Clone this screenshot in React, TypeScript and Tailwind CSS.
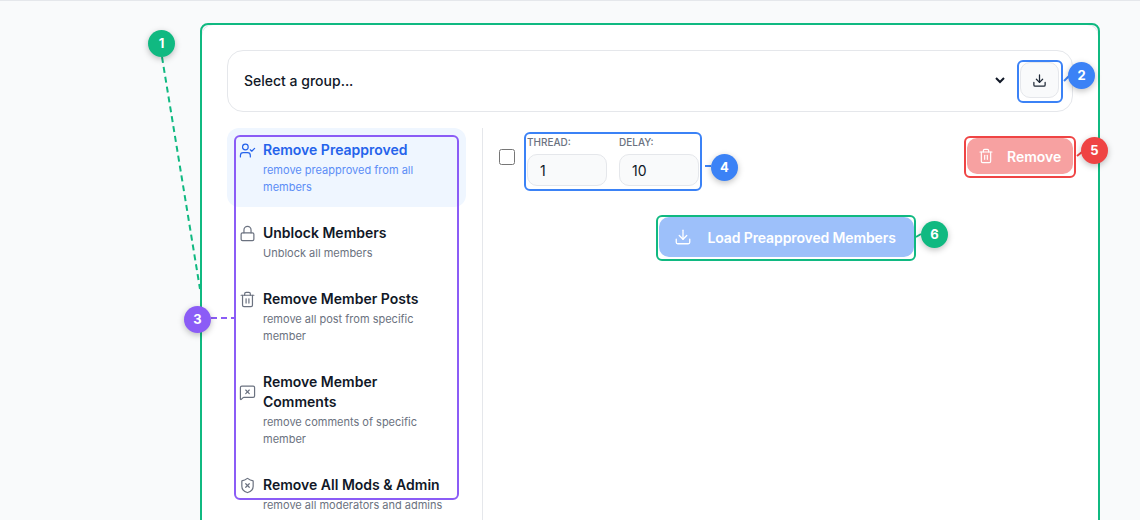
import { Download, Lock, MessageSquareX, ShieldX, Trash2, UserCheck } from "lucide-react";
import type { ReactNode } from "react";

const items = [
  { icon: UserCheck, title: "Remove Preapproved", desc: "remove preapproved from all members", active: true },
  { icon: Lock, title: "Unblock Members", desc: "Unblock all members" },
  { icon: Trash2, title: "Remove Member Posts", desc: "remove all post from specific member" },
  { icon: MessageSquareX, title: "Remove Member Comments", desc: "remove comments of specific member" },
  { icon: ShieldX, title: "Remove All Mods & Admin", desc: "remove all moderators and admins" },
];

function Badge({ className, children }: { className: string; children: ReactNode }) {
  return (
    <div className={`absolute flex h-[27px] w-[27px] items-center justify-center rounded-full text-[13px] font-bold text-white shadow-[0_2px_6px_rgba(0,0,0,0.25)] ${className}`}>
      {children}
    </div>
  );
}

export default function App() {
  return (
    <div className="relative h-[520px] w-full overflow-hidden border-t border-[#e5e7eb] bg-[#f9fafb] font-['Inter',sans-serif] text-[#111827]">
      <div className="ml-[201px] mt-[23px] h-[600px] w-[898px] rounded-[12px] border border-[#e5e7eb] bg-white pl-[25px] pr-[25px] pt-[25px]">
        <div className="flex h-[62px] items-center rounded-[16px] border border-[#e5e7eb] bg-white pl-[12px] pr-[13px]">
          <select className="mb-[2px] h-full flex-1 bg-transparent text-[14px] font-medium outline-none">
            <option>Select a group...</option>
          </select>
          <button className="ml-[12px] mb-[2px] flex h-[36px] w-[39px] items-center justify-center rounded-[10px] border border-[#e5e7eb] bg-[#f9fafb] text-[#1f2937]">
            <Download size={15} strokeWidth={2} />
          </button>
        </div>
        <div className="mt-[16px] flex">
          <div className="flex w-[239px] shrink-0 flex-col gap-[4px]">
            {items.map((it) => (
              <div key={it.title} className={`rounded-[12px] px-[12px] pb-[11px] pt-[12px] ${it.active ? "bg-[#eff6ff]" : ""}`}>
                <div className="flex items-center gap-[7px]">
                  <it.icon size={17} strokeWidth={1.7} className={`shrink-0 ${it.active ? "text-[#2563eb]" : "text-[#6b7280]"}`} />
                  <div className={`text-[14px] font-semibold leading-[20px] ${it.active ? "text-[#2563eb]" : "text-[#111827]"}`}>{it.title}</div>
                </div>
                <div className={`ml-[24px] mt-[2px] text-[11px] leading-[17px] ${it.active ? "text-[#5b8df6]" : "text-[#6b7280]"}`}>{it.desc}</div>
              </div>
            ))}
          </div>
          <div className="ml-[16px] flex h-[400px] flex-1 flex-col border-l border-[#e5e7eb] pl-[16px]">
            <div className="flex items-start">
              <input type="checkbox" className="mt-[21px] h-4 w-4" />
              <div className="ml-[12px] mt-[7px] flex gap-[12px]">
                <div className="w-[80px]">
                  <div className="text-[10px] font-medium leading-[14px] text-[#6b7280]">THREAD:</div>
                  <input readOnly value="1" className="mt-[5px] h-[32px] w-full rounded-[10px] border border-[#e5e7eb] bg-[#f9fafb] px-[12px] text-[14px] outline-none" />
                </div>
                <div className="w-[80px]">
                  <div className="text-[10px] font-medium leading-[14px] text-[#6b7280]">DELAY:</div>
                  <input readOnly value="10" className="mt-[5px] h-[32px] w-full rounded-[10px] border border-[#e5e7eb] bg-[#f9fafb] px-[12px] text-[14px] outline-none" />
                </div>
              </div>
              <button className="ml-auto mt-[10px] flex h-[36px] w-[106px] items-center rounded-[10px] bg-[#f7a1a1] pl-[11px] text-[14px] font-semibold text-white">
                <Trash2 size={16} strokeWidth={1.75} />
                <span className="ml-[13px]">Remove</span>
              </button>
            </div>
            <div className="mt-[31px] flex justify-center">
              <button className="flex h-[40px] w-[255px] items-center rounded-[10px] bg-[#9dc0fa] pl-[15px] text-[14px] font-semibold text-white">
                <Download size={18} strokeWidth={1.75} />
                <span className="ml-[16px] whitespace-nowrap tracking-[-0.12px]">Load Preapproved Members</span>
              </button>
            </div>
          </div>
        </div>
      </div>

      {/* annotation outlines */}
      <div className="pointer-events-none absolute left-[200px] top-[22px] h-[620px] w-[900px] rounded-[8px] border-2 border-[#10b981]" />
      <div className="pointer-events-none absolute left-[1017px] top-[59px] h-[43px] w-[46px] rounded-[6px] border-2 border-[#3b82f6]" />
      <div className="pointer-events-none absolute left-[234px] top-[134px] h-[365px] w-[225px] rounded-[6px] border-2 border-[#8b5cf6]" />
      <div className="pointer-events-none absolute left-[524px] top-[131px] h-[59px] w-[178px] rounded-[6px] border-2 border-[#3b82f6]" />
      <div className="pointer-events-none absolute left-[964px] top-[135px] h-[42px] w-[112px] rounded-[6px] border-2 border-[#ef4444]" />
      <div className="pointer-events-none absolute left-[656px] top-[214px] h-[46px] w-[260px] rounded-[6px] border-2 border-[#10b981]" />

      <svg className="pointer-events-none absolute left-0 top-0" width="1140" height="520" fill="none" strokeWidth="2">
        <path d="M162 56L200 288" stroke="#10b981" strokeDasharray="6 4" />
        <path d="M211 317H234" stroke="#8b5cf6" strokeDasharray="6 4" />
        <path d="M1064 80L1069 75" stroke="#3b82f6" />
        <path d="M705 165H711" stroke="#3b82f6" />
        <path d="M1077 155L1082 151" stroke="#ef4444" />
        <path d="M916 236L921 233" stroke="#10b981" />
      </svg>

      <Badge className="left-[148px] top-[29px] bg-[#10b981]">1</Badge>
      <Badge className="left-[1068px] top-[61px] bg-[#3b82f6]">2</Badge>
      <Badge className="left-[184px] top-[305px] bg-[#8b5cf6]">3</Badge>
      <Badge className="left-[711px] top-[153px] bg-[#3b82f6]">4</Badge>
      <Badge className="left-[1081px] top-[136px] bg-[#ef4444]">5</Badge>
      <Badge className="left-[921px] top-[220px] bg-[#10b981]">6</Badge>
    </div>
  );
}
